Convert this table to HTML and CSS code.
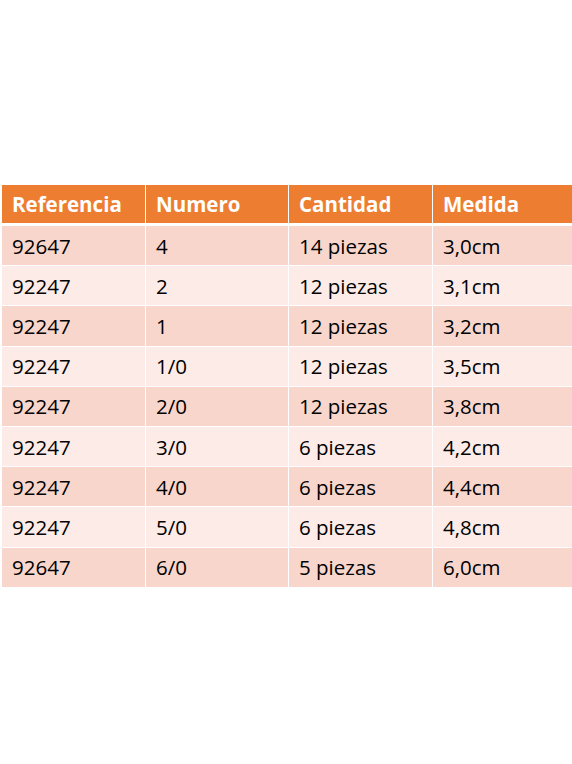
FILE: index.html
```html
<!DOCTYPE html>
<html lang="es">
<head>
<meta charset="utf-8">
<title>Tabla</title>
<link rel="stylesheet" href="styles.css">
</head>
<body>
<div class="table">
  <div class="row head">
    <div class="cell">Referencia</div><div class="cell">Numero</div><div class="cell">Cantidad</div><div class="cell">Medida</div>
  </div>
  <div class="row odd"><div class="cell">92647</div><div class="cell">4</div><div class="cell">14 piezas</div><div class="cell">3,0cm</div></div>
  <div class="row even"><div class="cell">92247</div><div class="cell">2</div><div class="cell">12 piezas</div><div class="cell">3,1cm</div></div>
  <div class="row odd"><div class="cell">92247</div><div class="cell">1</div><div class="cell">12 piezas</div><div class="cell">3,2cm</div></div>
  <div class="row even"><div class="cell">92247</div><div class="cell">1/0</div><div class="cell">12 piezas</div><div class="cell">3,5cm</div></div>
  <div class="row odd"><div class="cell">92247</div><div class="cell">2/0</div><div class="cell">12 piezas</div><div class="cell">3,8cm</div></div>
  <div class="row even"><div class="cell">92247</div><div class="cell">3/0</div><div class="cell">6 piezas</div><div class="cell">4,2cm</div></div>
  <div class="row odd"><div class="cell">92247</div><div class="cell">4/0</div><div class="cell">6 piezas</div><div class="cell">4,4cm</div></div>
  <div class="row even"><div class="cell">92247</div><div class="cell">5/0</div><div class="cell">6 piezas</div><div class="cell">4,8cm</div></div>
  <div class="row odd"><div class="cell">92647</div><div class="cell">6/0</div><div class="cell">5 piezas</div><div class="cell">6,0cm</div></div>
</div>
</body>
</html>
```
FILE: styles.css
```css
html, body {
  margin: 0;
  padding: 0;
  background: #ffffff;
  overflow: hidden;
}
body {
  font-family: "Open Sans", Lato, sans-serif;
  font-size: 20.5px;
  color: #000000;
  font-variant-ligatures: none;
}
.table {
  margin: 185px 0 0 2px;
  display: flex;
  flex-direction: column;
  gap: 1px;
}
.row {
  display: grid;
  grid-template-columns: 143px 142px 143px 1fr;
  column-gap: 1px;
  height: 39.2px;
}
.row.head {
  height: 38px;
  margin-bottom: 2px;
}
.cell {
  display: flex;
  align-items: center;
  padding-left: 10px;
  white-space: nowrap;
}
.head .cell {
  background: #ed7d31;
  color: #ffffff;
  font-weight: 700;
}
.odd .cell {
  background: #f8d6cc;
}
.even .cell {
  background: #fcebe7;
}
```
